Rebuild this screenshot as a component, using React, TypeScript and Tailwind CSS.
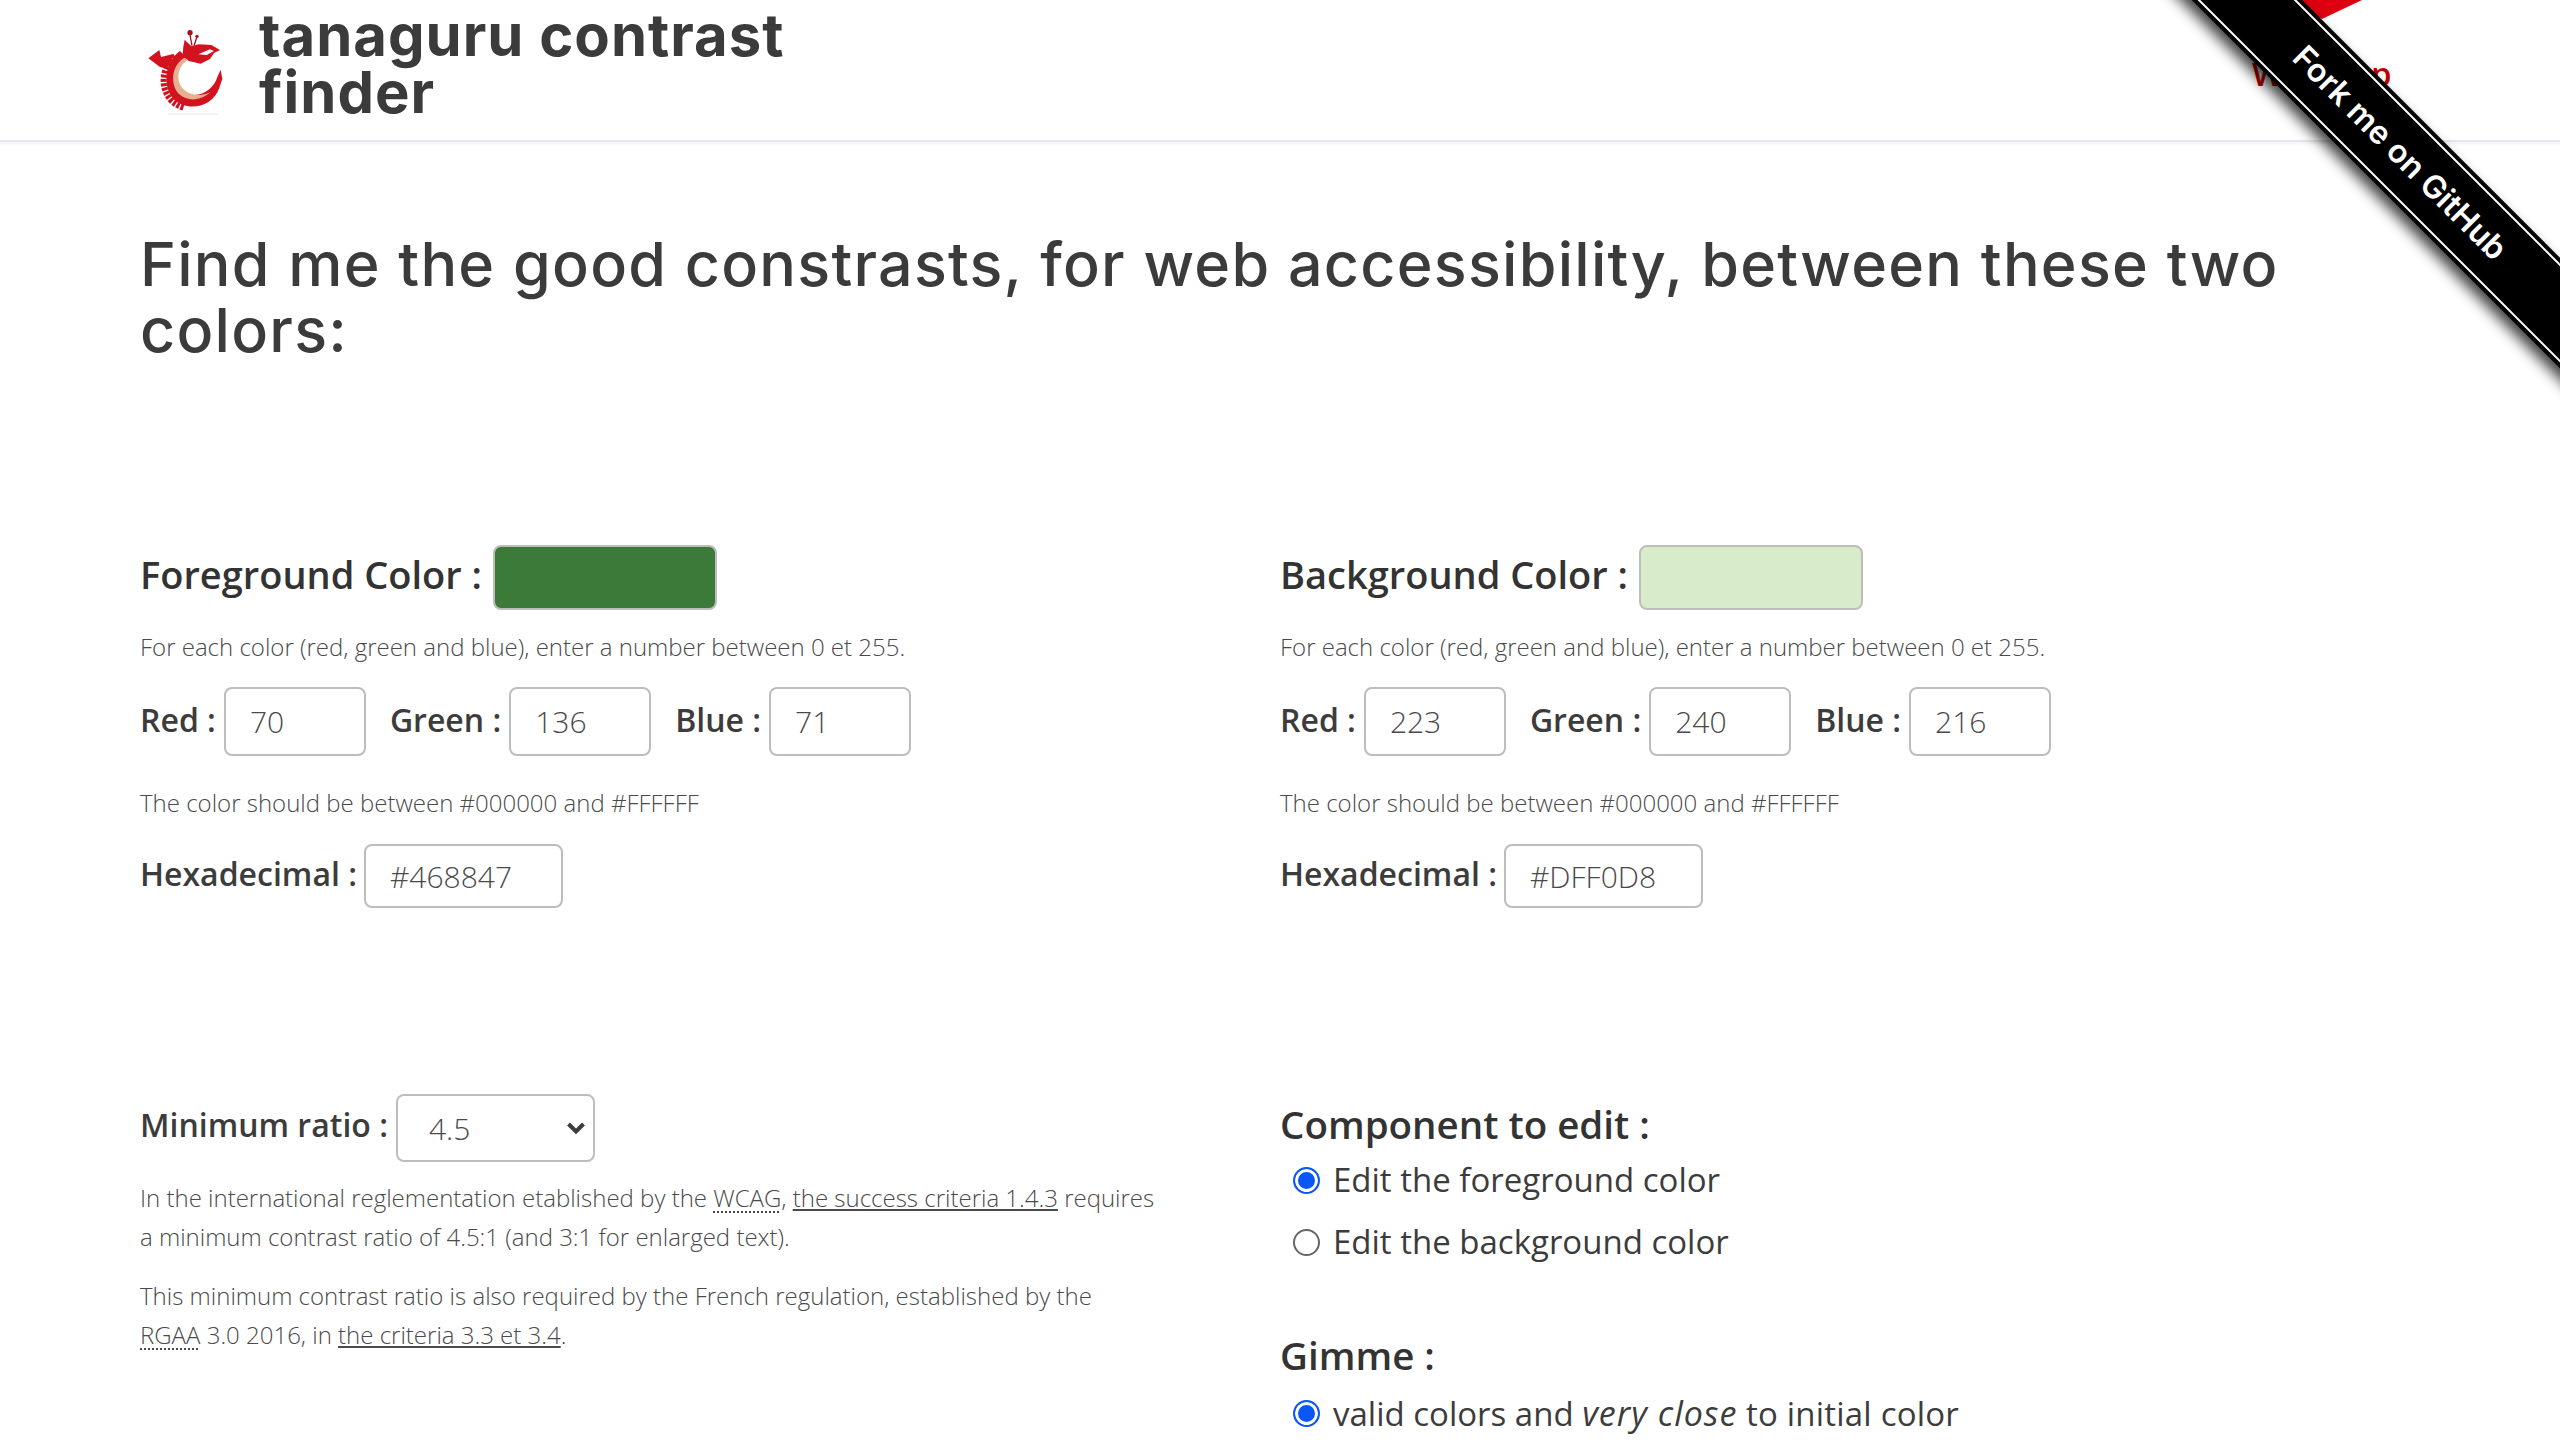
const Logo = () => (
  <svg viewBox="0 0 360 330" className="w-[120px] h-[110px] shrink-0">
    {/* back spikes */}
    <path d="M140 122C100 155 94 215 128 254C140 266 152 272 166 276" fill="none" stroke="#cf1420" strokeWidth="18" strokeDasharray="9 4" transform="translate(-5 2)" />
    {/* body */}
    <path d="M150 108C102 140 96 218 134 256C172 290 248 278 268 218L277 192L272 164L262 186C254 214 226 240 192 240C156 238 132 205 144 165C150 150 160 140 174 132Z" fill="#d3121f" />
    {/* belly */}
    <path d="M164 128C128 146 116 205 148 238C172 260 214 258 240 232C214 246 180 242 160 222C136 198 142 152 174 134Z" fill="#e8b090" />
    {/* head */}
    <path d="M160 95L164 74L184 94L206 88L244 90L270 105L252 114L240 132L212 146L176 138L158 118Z" fill="#d3121f" />
    <path d="M205 118L240 103L252 108L230 120Z" fill="#ffffff" />
    <circle cx="180" cy="53" r="8" fill="#a80f1a" />
    <circle cx="201" cy="64" r="5" fill="#a80f1a" />
    <path d="M180 60L186 92M200 68L192 92" stroke="#a80f1a" strokeWidth="4" fill="none" />
    {/* wing */}
    <path d="M55 130L88 105L93 126L132 116L112 162L90 156Z" fill="#d3121f" />
    <path d="M115 297H265" stroke="#e6e6e6" strokeWidth="3" />
  </svg>
);

const NumberField = ({ label, value }: { label: string; value: string }) => (
  <label className="flex items-center gap-2 text-[32px] font-semibold text-[#3c3c3c]">
    <span className="pb-[4px]">{label} :</span>
    <input
      defaultValue={value}
      className="w-[142px] h-[69px] px-6 border-2 border-[#bdbdbd] rounded-lg text-[30px] font-light text-[#4a4a4a] outline-none"
    />
  </label>
);

const ColorPanel = ({
  title,
  swatch,
  red,
  green,
  blue,
  hex,
}: {
  title: string;
  swatch: string;
  red: string;
  green: string;
  blue: string;
  hex: string;
}) => (
  <div>
    <div className="flex items-center gap-[11px]">
      <h2 className="pb-[6px] text-[38px] font-semibold text-[#333]">{title} :</h2>
      <div
        className="w-[224px] h-[65px] rounded-lg border-2 border-[#bdbdbd]"
        style={{ backgroundColor: swatch }}
      />
    </div>
    <p className="mt-[18px] text-[24px] leading-[38px] font-light text-[#4a4a4a]">
      For each color (red, green and blue), enter a number between 0 et 255.
    </p>
    <div className="mt-[21px] flex gap-6">
      <NumberField label="Red" value={red} />
      <NumberField label="Green" value={green} />
      <NumberField label="Blue" value={blue} />
    </div>
    <p className="mt-[28px] text-[24px] leading-[38px] font-light text-[#4a4a4a]">
      The color should be between #000000 and #FFFFFF
    </p>
    <label className="mt-[22px] flex items-center gap-[7px] text-[32px] font-semibold text-[#3c3c3c]">
      <span className="pb-[4px]">Hexadecimal :</span>
      <input
        defaultValue={hex}
        className="w-[199px] h-[64px] px-6 border-2 border-[#bdbdbd] rounded-lg text-[30px] font-light text-[#4a4a4a] outline-none"
      />
    </label>
  </div>
);

const Radio = ({ name, checked, children }: { name: string; checked?: boolean; children: React.ReactNode }) => (
  <label className="flex items-center gap-[13px] h-[44px] pl-[13px] text-[33px] font-medium text-[#3c3c3c]">
    <input
      type="radio"
      name={name}
      defaultChecked={checked}
      className="w-[27px] h-[27px] m-0 appearance-none rounded-full border-2 border-[#666] bg-white checked:border-[#0b57f5] checked:bg-[#0b57f5] checked:shadow-[inset_0_0_0_3px_#fff]"
    />
    <span>{children}</span>
  </label>
);

export default function App() {
  return (
    <div className="relative h-screen overflow-hidden bg-white font-['Open_Sans',sans-serif]">
      <header className="h-[142px] flex items-center pl-[130px] gap-[9px] border-b-2 border-[#e6e6ef] shadow-[0_2px_3px_rgba(0,0,0,0.05)]">
        <Logo />
        <div className="w-[600px] mb-[12px] font-['Inter',sans-serif] font-bold text-[58px] leading-[57px] tracking-[1px] text-[#3b3b3b]">
          tanaguru contrast
          <br />
          finder
        </div>
      </header>

      {/* nav item that sits under the ribbon */}
      <div className="absolute left-[2252px] top-[49px] text-[33px] font-semibold text-[#c00000]">Web app</div>
      <svg viewBox="0 0 72 19" className="absolute left-[2290px] top-0 w-[72px] h-[19px]">
        <path d="M0 0H72L32 19Z" fill="#dd0010" />
      </svg>

      <main className="px-[140px]">
        <h1 className="mt-[89px] w-[2240px] font-['Inter',sans-serif] font-medium text-[61px] leading-[66px] tracking-[1.26px] text-[#3b3b3b]">
          Find me the good constrasts, for web accessibility, between these two colors:
        </h1>

        <div className="mt-[182px] grid grid-cols-[1140px_1fr]">
          <ColorPanel title="Foreground Color" swatch="#3c7a3a" red="70" green="136" blue="71" hex="#468847" />
          <ColorPanel title="Background Color" swatch="#d9ecc9" red="223" green="240" blue="216" hex="#DFF0D8" />
        </div>

        <div className="mt-[186px] grid grid-cols-[1140px_1fr]">
          <div className="w-[1022px]">
            <label className="flex items-center gap-2 text-[32px] font-semibold text-[#3c3c3c]">
              <span className="pb-[6px]">Minimum ratio :</span>
              <span className="relative">
                <select className="block w-[199px] h-[68px] pl-[31px] appearance-none border-2 border-[#bdbdbd] rounded-lg bg-white text-[30px] font-light text-[#4a4a4a] outline-none">
                  <option>4.5</option>
                  <option>3</option>
                  <option>7</option>
                </select>
                <svg viewBox="0 0 20 14" className="absolute right-[9px] top-[27px] w-[20px] h-[14px]">
                  <path d="M2.5 3L10 10.5L17.5 3" fill="none" stroke="#3b3b3b" strokeWidth="4" />
                </svg>
              </span>
            </label>
            <p className="mt-[16px] text-[24px] leading-[39px] font-light text-[#4a4a4a]">
              In the international reglementation etablished by the{" "}
              <abbr className="underline decoration-dotted decoration-2 underline-offset-4">WCAG</abbr>,{" "}
              <a href="#" className="underline underline-offset-2">the success criteria 1.4.3</a> requires a minimum
              contrast ratio of 4.5:1 (and 3:1 for enlarged text).
            </p>
            <p className="mt-[20px] text-[24px] leading-[39px] font-light text-[#4a4a4a]">
              This minimum contrast ratio is also required by the French regulation, established by the
              <br />
              <abbr className="underline decoration-dotted decoration-2 underline-offset-4">RGAA</abbr> 3.0 2016, in{" "}
              <a href="#" className="underline underline-offset-2">the criteria 3.3 et 3.4</a>.
            </p>
          </div>
          <div className="pt-[4px]">
            <h2 className="text-[38.5px] leading-[52px] font-semibold text-[#333]">Component to edit :</h2>
            <div className="mt-[8px] flex flex-col gap-[18px]">
              <Radio name="component" checked>Edit the foreground color</Radio>
              <Radio name="component">Edit the background color</Radio>
            </div>
            <h2 className="mt-[65px] text-[38.5px] leading-[52px] font-semibold text-[#333]">Gimme :</h2>
            <div className="mt-[10px]">
              <Radio name="gimme" checked>
                valid colors and <em className="text-[34px] tracking-[1px]">very close</em>{" "}
                <span className="tracking-[0.2px]">to initial color</span>
              </Radio>
            </div>
          </div>
        </div>
      </main>

      {/* Fork ribbon */}
      <div className="absolute top-0 right-0 w-[600px] h-[500px] overflow-hidden pointer-events-none">
        <div className="absolute left-[-10px] top-[114px] w-[900px] h-[78px] rotate-45 bg-black p-[4px] shadow-[0_8px_14px_rgba(0,0,0,0.75)]">
          <a
            href="#"
            className="flex h-full items-center justify-center border-y-2 border-white font-['Inter',sans-serif] font-semibold text-[32px] text-white"
          >
            Fork me on GitHub
          </a>
        </div>
      </div>
    </div>
  );
}
